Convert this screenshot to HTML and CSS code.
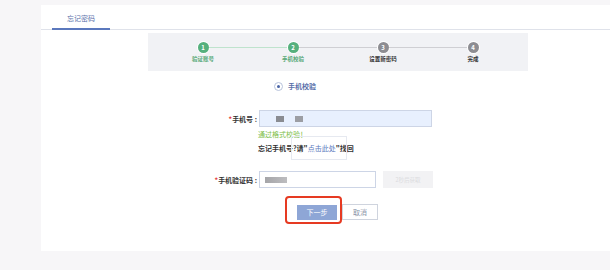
FILE: index.html
```html
<!DOCTYPE html>
<html lang="zh-CN">
<head>
    <meta charset="UTF-8">
    <title>忘记密码</title>
    <link rel="stylesheet" href="styles.css">
</head>
<body>
    <div class="card">
        <div class="tabs">
            <div class="tab">忘记密码</div>
        </div>

        <div class="steps">
            <div class="step done">
                <div class="track"><span class="half"></span><span class="dot">1</span><span class="half green"></span></div>
                <div class="step-label">验证账号</div>
            </div>
            <div class="step done">
                <div class="track"><span class="half green"></span><span class="dot">2</span><span class="half"></span></div>
                <div class="step-label">手机校验</div>
            </div>
            <div class="step">
                <div class="track"><span class="half"></span><span class="dot">3</span><span class="half"></span></div>
                <div class="step-label">设置新密码</div>
            </div>
            <div class="step">
                <div class="track"><span class="half"></span><span class="dot">4</span><span class="half none"></span></div>
                <div class="step-label">完成</div>
            </div>
        </div>

        <div class="method">
            <span class="radio"></span>
            <span class="method-text">手机校验</span>
        </div>

        <div class="form-row first">
            <label class="form-label"><i>*</i>手机号 :</label>
            <div class="input phone">
                <span class="mask"></span>
                <span class="mask light"></span>
            </div>
        </div>
        <div class="hint ok">通过格式校验！</div>
        <div class="hint forget">忘记手机号?请"<a href="#">点击此处</a>"找回</div>

        <div class="form-row second">
            <label class="form-label"><i>*</i>手机验证码 :</label>
            <div class="input code">
                <span class="mask wide"></span>
            </div>
            <button class="btn-send" disabled>2秒后获取</button>
        </div>

        <div class="actions">
            <div class="highlight"></div>
            <button class="btn primary">下一步</button>
            <button class="btn">取消</button>
        </div>
    </div>
</body>
</html>
```

FILE: styles.css
```css
body {
    margin: 0;
    background-color: #f7f6f8;
    font-family: "Noto Sans CJK SC", "Noto Sans", sans-serif;
    height: 270px;
    overflow: hidden;
    color: #333;
}
.card {
    margin: 5px 0 0 41px;
    width: 580px;
    height: 246px;
    background-color: #fff;
}
.tabs {
    padding-left: 11px;
    border-bottom: 1px solid #dfe2ea;
    display: flex;
}
.tab {
    width: 58px;
    text-align: center;
    font-size: 7px;
    line-height: 19px;
    padding-top: 4px;
    color: #5a70aa;
    border-bottom: 2px solid #5b78bd;
    margin-bottom: -1px;
}

/* 步骤条 */
.steps {
    margin: 3px 0 0 107px;
    width: 380px;
    height: 38px;
    box-sizing: border-box;
    padding: 9px 10px 0;
    background-color: #f1f2f5;
    display: flex;
}
.step {
    width: 90px;
}
.track {
    display: flex;
    align-items: center;
    height: 11px;
}
.half {
    flex: 1;
    height: 1px;
    background-color: #cfcfd3;
}
.half.green {
    background-color: #bfe3cd;
}
.step:first-child .half:first-child,
.half.none {
    background-color: transparent;
}
.dot {
    width: 11px;
    height: 11px;
    border-radius: 50%;
    background-color: #8d8d92;
    color: #fff;
    font-size: 6px;
    font-weight: bold;
    line-height: 11px;
    text-align: center;
    box-shadow: 0 0 0 1px #fff;
}
.step.done .dot {
    background-color: #55b07d;
}
.step-label {
    margin-top: 2px;
    font-size: 5.5px;
    line-height: 8px;
    font-weight: bold;
    text-align: center;
    color: #333;
}
.step.done .step-label {
    color: #55a877;
}

.method {
    margin: 10px 0 0 233px;
    display: flex;
    align-items: center;
    height: 10px;
}
.radio {
    width: 7px;
    height: 7px;
    border: 1px solid #b8c3dc;
    border-radius: 50%;
    position: relative;
}
.radio::after {
    content: "";
    position: absolute;
    left: 2px;
    top: 2px;
    width: 3px;
    height: 3px;
    border-radius: 50%;
    background-color: #4a64a6;
}
.method-text {
    margin-left: 5px;
    font-size: 7px;
    font-weight: bold;
    color: #5a70aa;
}

.form-row {
    display: flex;
    align-items: center;
    margin-left: 109px;
}
.form-row.first {
    margin-top: 19px;
}
.form-row.second {
    margin-top: 18px;
}
.form-label {
    width: 107px;
    text-align: right;
    font-size: 7px;
    font-weight: bold;
    color: #333;
}
.form-label i {
    font-style: normal;
    color: #e4393c;
}
.input {
    margin-left: 2px;
    height: 15px;
    border: 1px solid #cdd5e6;
    display: flex;
    align-items: center;
}
.input.phone {
    width: 155px;
    padding-left: 16px;
    background-color: #e8f0fe;
}
.input.code {
    width: 110px;
    padding-left: 5px;
    background-color: #fff;
}
.mask {
    width: 8px;
    height: 6px;
    background-color: #8a8c92;
    margin-right: 11px;
}
.mask.light {
    background-color: #9c9ea4;
}
.mask.wide {
    width: 22px;
    background: linear-gradient(to right, #a5a5a8, #bdbdc0);
}
.btn-send {
    margin-left: 7px;
    width: 50px;
    height: 17px;
    border: none;
    background-color: #f2f2f4;
    color: #dcdcdf;
    font-family: inherit;
    font-size: 5.5px;
}

.hint {
    margin-left: 217px;
    font-size: 7px;
    line-height: 10px;
    margin-top: 4px;
    color: #333;
    font-weight: bold;
}
.hint.ok {
    margin-top: 2px;
    color: #80c04a;
    font-weight: normal;
}
/* 点击此处 外面那个浮框 */
.hint.forget {
    position: relative;
}
.hint.forget::before {
    content: "";
    position: absolute;
    left: 33px;
    top: -7px;
    width: 54px;
    height: 22px;
    border: 1px solid #e6e9f0;
}
.hint.forget a {
    color: #5b78bd;
    font-weight: normal;
    text-decoration: none;
}

.actions {
    margin: 16px 0 0 256px;
    display: flex;
    align-items: center;
    gap: 5px;
    position: relative;
}
.btn {
    height: 16px;
    width: 36px;
    border: 1px solid #cfd4de;
    background-color: #fff;
    color: #8a94a8;
    font-family: inherit;
    font-size: 7px;
    padding: 0;
}
.btn.primary {
    width: 40px;
    height: 15px;
    border: none;
    background-color: #8ea6d6;
    color: #fff;
}
.highlight {
    position: absolute;
    left: -12px;
    top: -8px;
    width: 53px;
    height: 24px;
    border: 2px solid #e63a22;
    border-radius: 4px;
}
```
